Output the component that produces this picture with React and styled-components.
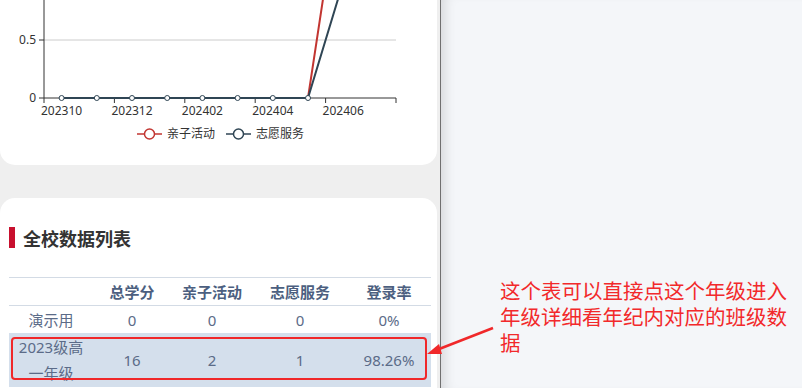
import React from 'react';
import styled, { createGlobalStyle } from 'styled-components';

const GlobalStyle = createGlobalStyle`
  html, body { margin: 0; padding: 0; }
  body {
    font-family: "Noto Sans", "Noto Sans CJK SC", sans-serif;
    background: #f4f6f9;
  }
`;

const Page = styled.div`
  display: flex;
  width: 802px;
  height: 388px;
  overflow: hidden;
  position: relative;
`;

const Phone = styled.div`
  width: 437px;
  padding-right: 3px;
  background: #efefef;
  border-right: 1px solid #707070;
  display: flex;
  flex-direction: column;
  gap: 33px;
  flex-shrink: 0;
`;

const Side = styled.div`
  flex: 1;
  background: #f4f6f9;
  box-shadow: inset 12px 0 12px -8px rgba(0, 0, 0, 0.12);
  padding: 277px 0 0 59px;
`;

const Card = styled.div`
  background: #fff;
  border-radius: ${p => (p.$top ? '0 0 15px 15px' : '15px 15px 0 0')};
  ${p => (p.$top ? 'height: 165px;' : 'flex: 1;')}
  position: relative;
`;

const ChartSvg = styled.svg`
  display: block;
  font-family: "Noto Sans", "Noto Sans CJK SC", sans-serif;
`;

const Title = styled.h2`
  margin: 0;
  padding: 29px 0 0 9px;
  display: flex;
  align-items: center;
  gap: 8px;
  font-size: 18px;
  font-weight: 700;
  color: #333;
  height: 21px;
  &::before {
    content: '';
    width: 6px;
    height: 21px;
    background: #c8102e;
  }
`;

const Table = styled.table`
  margin: 29px 0 0 9px;
  width: 422px;
  border-collapse: collapse;
  table-layout: fixed;
  border-top: 1px solid #d3dbe5;
  font-size: 15px;
  color: #5b6b88;
`;

const Th = styled.th`
  height: 27px;
  padding: 0;
  font-weight: 700;
  color: #4c5f80;
  border-bottom: 1px solid #d3dbe5;
  width: ${p => p.$w}px;
`;

const Row = styled.tr`
  background: ${p => (p.$active ? '#d4dfec' : 'transparent')};
`;

const Td = styled.td`
  padding: 0;
  text-align: center;
  height: ${p => (p.$tall ? 54 : 27)}px;
  line-height: 26px;
`;

const Mark = styled.div`
  position: absolute;
  left: 11px;
  top: 139px;
  width: 412px;
  height: 39px;
  border: 2.5px solid #f0282a;
  border-radius: 4px;
`;

const Note = styled.p`
  margin: 0;
  width: 300px;
  font-size: 20.5px;
  line-height: 26px;
  color: #f2292b;
  font-family: "Noto Sans CJK SC", sans-serif;
`;

const Arrow = styled.svg`
  position: absolute;
  left: 420px;
  top: 320px;
`;

const months = ['202310', '202311', '202312', '202401', '202402', '202403', '202404', '202405', '202406', '202407'];
const x0 = 44;
const band = 35.2;
const px = i => x0 + band * i + band / 2;
const yv = v => 98 - v * 116;
const red = [0, 0, 0, 0, 0, 0, 0, 0, 2];
const dark = [0, 0, 0, 0, 0, 0, 0, 0, 1];

function Chart() {
  const pts = arr => arr.map((v, i) => `${px(i)},${yv(v)}`).join(' ');
  return (
    <ChartSvg width="437" height="150">
      <line x1="44" y1="40" x2="396" y2="40" stroke="#ccc" />
      <line x1="44" y1="0" x2="44" y2="98" stroke="#333" />
      <line x1="39" y1="40" x2="44" y2="40" stroke="#333" />
      <line x1="39" y1="98" x2="44" y2="98" stroke="#333" />
      <text x="36" y="44" fontSize="12" fill="#333" textAnchor="end">0.5</text>
      <text x="36" y="102" fontSize="12" fill="#333" textAnchor="end">0</text>
      <line x1="44" y1="98" x2="396" y2="98" stroke="#333" />
      {[0, 2, 4, 6, 8, 10].map(i => (
        <line key={i} x1={x0 + band * i} y1="98" x2={x0 + band * i} y2="103" stroke="#333" />
      ))}
      {months.map((m, i) =>
        i % 2 === 0 ? (
          <text key={m} x={px(i)} y="115" fontSize="12" fill="#333" textAnchor="middle">{m}</text>
        ) : null
      )}
      <polyline points={pts(red)} fill="none" stroke="#c23531" strokeWidth="2" />
      <polyline points={pts(dark)} fill="none" stroke="#2f4554" strokeWidth="2" />
      {dark.slice(0, 8).map((v, i) => (
        <circle key={i} cx={px(i)} cy={yv(v)} r="2.5" fill="#fff" stroke="#2f4554" strokeWidth="1" />
      ))}
      <g>
        <line x1="137" y1="134" x2="162" y2="134" stroke="#c23531" strokeWidth="1.5" />
        <circle cx="149.5" cy="134" r="5" fill="#fff" stroke="#c23531" strokeWidth="1.5" />
        <text x="167" y="138" fontSize="12" fill="#333">亲子活动</text>
        <line x1="226" y1="134" x2="251" y2="134" stroke="#2f4554" strokeWidth="1.5" />
        <circle cx="238.5" cy="134" r="5" fill="#fff" stroke="#2f4554" strokeWidth="1.5" />
        <text x="256" y="138" fontSize="12" fill="#333">志愿服务</text>
      </g>
    </ChartSvg>
  );
}

const rows = [
  { name: '演示用', total: 0, parent: 0, volunteer: 0, rate: '0%' },
  { name: '2023级高一年级', total: 16, parent: 2, volunteer: 1, rate: '98.26%', active: true },
];

export default function App() {
  return (
    <Page>
      <GlobalStyle />
      <Phone>
        <Card $top>
          <Chart />
        </Card>
        <Card>
          <Title>全校数据列表</Title>
          <Table>
            <thead>
              <tr>
                <Th $w={84}></Th>
                <Th $w={78}>总学分</Th>
                <Th $w={82}>亲子活动</Th>
                <Th $w={94}>志愿服务</Th>
                <Th $w={84}>登录率</Th>
              </tr>
            </thead>
            <tbody>
              {rows.map(r => (
                <Row key={r.name} $active={r.active}>
                  <Td $tall={r.active}>{r.active ? <>2023级高<br />一年级</> : r.name}</Td>
                  <Td $tall={r.active}>{r.total}</Td>
                  <Td $tall={r.active}>{r.parent}</Td>
                  <Td $tall={r.active}>{r.volunteer}</Td>
                  <Td $tall={r.active}>{r.rate}</Td>
                </Row>
              ))}
            </tbody>
          </Table>
          <Mark />
        </Card>
      </Phone>
      <Side>
        <Note>这个表可以直接点这个年级进入年级详细看年纪内对应的班级数据</Note>
      </Side>
      <Arrow width="80" height="40" viewBox="0 0 80 40">
        <path d="M73 8 L14 31" stroke="#f0282a" strokeWidth="2.5" fill="none" />
        <path d="M7 34 L19 24 L22 34 Z" fill="#f0282a" />
      </Arrow>
    </Page>
  );
}
